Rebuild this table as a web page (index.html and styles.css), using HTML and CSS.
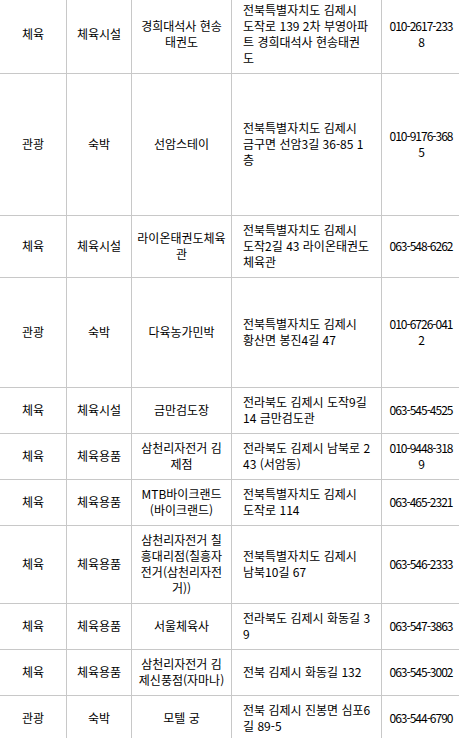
FILE: index.html
```html
<!DOCTYPE html>
<html lang="ko">
<head>
<meta charset="utf-8">
<title>시설 목록</title>
<link rel="stylesheet" href="styles.css">
</head>
<body>
<table class="list">
  <colgroup>
    <col class="c-type">
    <col class="c-cat">
    <col class="c-name">
    <col class="c-addr">
    <col class="c-tel">
  </colgroup>
  <tbody>
    <tr>
      <td>체육</td><td>체육시설</td><td class="name">경희대석사 현송태권도</td>
      <td class="addr">전북특별자치도 김제시 도작로 139 2차 부영아파트 경희대석사 현송태권도</td>
      <td class="tel">010-2617-2338</td>
    </tr>
    <tr class="r-142">
      <td>관광</td><td>숙박</td><td class="name">선암스테이</td>
      <td class="addr">전북특별자치도 김제시 금구면 선암3길 36-85 1층</td>
      <td class="tel">010-9176-3685</td>
    </tr>
    <tr>
      <td>체육</td><td>체육시설</td><td class="name">라이온태권도체육관</td>
      <td class="addr">전북특별자치도 김제시 도작2길 43 라이온태권도 체육관</td>
      <td class="tel">063-548-6262</td>
    </tr>
    <tr class="r-110">
      <td>관광</td><td>숙박</td><td class="name">다육농가민박</td>
      <td class="addr">전북특별자치도 김제시 황산면 봉진4길 47</td>
      <td class="tel">010-6726-0412</td>
    </tr>
    <tr>
      <td>체육</td><td>체육시설</td><td class="name">금만검도장</td>
      <td class="addr">전라북도 김제시 도작9길 14 금만검도관</td>
      <td class="tel">063-545-4525</td>
    </tr>
    <tr>
      <td>체육</td><td>체육용품</td><td class="name">삼천리자전거 김제점</td>
      <td class="addr">전라북도 김제시 남북로 243 (서암동)</td>
      <td class="tel">010-9448-3189</td>
    </tr>
    <tr>
      <td>체육</td><td>체육용품</td><td class="name">MTB바이크랜드(바이크랜드)</td>
      <td class="addr">전북특별자치도 김제시 도작로 114</td>
      <td class="tel">063-465-2321</td>
    </tr>
    <tr>
      <td>체육</td><td>체육용품</td><td class="name">삼천리자전거 칠흥대리점(칠흥자전거(삼천리자전거))</td>
      <td class="addr">전북특별자치도 김제시 남북10길 67</td>
      <td class="tel">063-546-2333</td>
    </tr>
    <tr>
      <td>체육</td><td>체육용품</td><td class="name">서울체육사</td>
      <td class="addr">전라북도 김제시 화동길 39</td>
      <td class="tel">063-547-3863</td>
    </tr>
    <tr>
      <td>체육</td><td>체육용품</td><td class="name">삼천리자전거 김제신풍점(자마나)</td>
      <td class="addr">전북 김제시 화동길 132</td>
      <td class="tel">063-545-3002</td>
    </tr>
    <tr>
      <td>관광</td><td>숙박</td><td class="name">모텔 궁</td>
      <td class="addr">전북 김제시 진봉면 심포6길 89-5</td>
      <td class="tel">063-544-6790</td>
    </tr>
  </tbody>
</table>
</body>
</html>
```

FILE: styles.css
```css
html, body {
  margin: 0;
  padding: 0;
  background: #fff;
}

body {
  overflow: hidden;
  font-family: "Noto Sans CJK KR", sans-serif;
  font-size: 12px;
  line-height: 16px;
  color: #000;
}

.list {
  width: 461px;
  margin: -5px 0 0 -1px;
  border-collapse: collapse;
  table-layout: fixed;
}

.c-type { width: 67px; }
.c-cat  { width: 65px; }
.c-name { width: 100px; }
.c-addr { width: 150px; }
.c-tel  { width: 79px; }

.list td {
  border: 1px solid #c8c8c8;
  padding: 6px 5px 7px;
  text-align: center;
  vertical-align: middle;
  word-break: break-all;
}

.list td.addr {
  text-align: left;
  padding-left: 11px;
  padding-right: 10.5px;
}

.list td.tel {
  letter-spacing: -1px;
}

.r-142 { height: 142px; }
.r-110 { height: 110px; }
```
